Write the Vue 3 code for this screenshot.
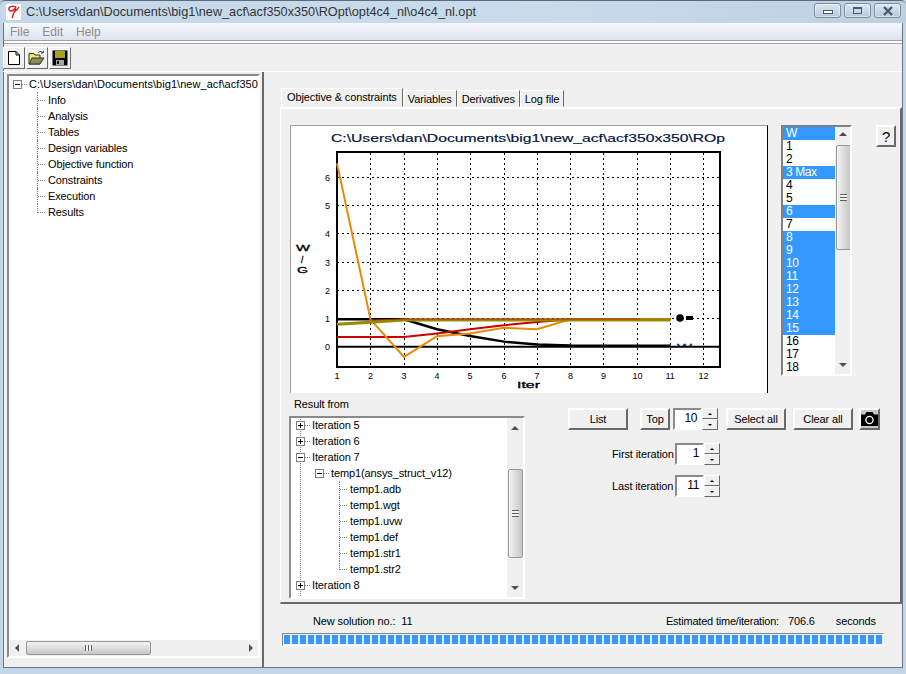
<script setup>
const path = 'C:\\Users\\dan\\Documents\\big1\\new_acf\\acf350x350\\ROpt\\opt4c4_nl\\o4c4_nl.opt'
const chartTitle = 'C:\\Users\\dan\\Documents\\big1\\new_acf\\acf350x350\\ROp'
const navItems = ['Info', 'Analysis', 'Tables', 'Design variables', 'Objective function', 'Constraints', 'Execution', 'Results']
const tabs = ['Objective & constraints', 'Variables', 'Derivatives', 'Log file']

const listItems = ['W', '1', '2', '3 Max', '4', '5', '6', '7', '8', '9', '10', '11', '12', '13', '14', '15', '16', '17', '18']
const picked = ['W', '3 Max', '6', '8', '9', '10', '11', '12', '13', '14', '15']

const files = ['temp1.adb', 'temp1.wgt', 'temp1.uvw', 'temp1.def', 'temp1.str1', 'temp1.str2']

// chart scale, in page pixels (viewBox starts at the panel corner)
const xs = [337, 370.5, 404, 437, 470, 504, 537, 570.5, 603.5, 637.5, 670.5, 703.5]
const ys = [346.7, 318.5, 290.3, 262.1, 233.9, 205.7, 177.5]
const pts = (vals) => vals.map((v, i) => `${xs[i]},${346.7 - v * 28.2}`).join(' ')

const curves = [
  { color: '#000000', w: 2.5, d: pts([0.97, 0.97, 0.97, 0.62, 0.38, 0.18, 0.08, 0.04, 0.03, 0.03, 0.03]) },
  { color: '#cc0000', w: 2, d: pts([0.34, 0.34, 0.34, 0.47, 0.62, 0.76, 0.88, 0.97, 0.97, 0.97, 0.97]) },
  { color: '#e88a00', w: 2, d: pts([6.5, 0.97, -0.36, 0.37, 0.47, 0.67, 0.62, 0.97, 0.97, 0.97, 0.97]) },
  { color: '#998800', w: 3, d: pts([0.8, 0.87, 0.95, 0.95, 0.95, 0.95, 0.95, 0.95, 0.95, 0.95, 0.95]) },
]
</script>

<template>
  <div class="window">
    <div class="titlebar">
      <svg class="app-icon" width="15" height="16" viewBox="0 0 15 16">
        <rect width="15" height="16" fill="#fff" />
        <path d="M10 3 C6 1 2 3 3 6 C4 8 8 7 10 3 L6 14 M8 8 C10 7 12 5 13 3" fill="none" stroke="#e02020" stroke-width="1.4" />
      </svg>
      <span class="title-text">{{ path }}</span>
      <div class="caption-btns">
        <div class="cap-btn"><i class="cap-min"></i></div>
        <div class="cap-btn"><i class="cap-max"></i></div>
        <div class="cap-btn cap-close">
          <svg width="12" height="10" viewBox="0 0 12 10"><path d="M2 1 L10 9 M10 1 L2 9" stroke="#4c5a68" stroke-width="2.4" /></svg>
        </div>
      </div>
    </div>

    <div class="client">
      <div class="menubar">
        <span>File</span><span>Edit</span><span>Help</span>
      </div>

      <div class="toolbar">
        <div class="tool-btn">
          <svg width="14" height="16" viewBox="0 0 14 16"><path d="M1.5 1.5 H9 L12.5 5 V14.5 H1.5 Z M9 1.5 V5 H12.5" fill="#fff" stroke="#000" /></svg>
        </div>
        <div class="tool-btn">
          <svg width="18" height="16" viewBox="0 0 18 16">
            <path d="M1 3.5 H6 L7 5 H12 V14 H1 Z" fill="#e8e860" stroke="#333" />
            <path d="M1 14 L4 8 H16 L12 14 Z" fill="#8a8a60" stroke="#333" />
            <path d="M10 3 C11 1 14 1 15 3 M15 3 L13 3 M15 3 L15.5 1" fill="none" stroke="#333" />
          </svg>
        </div>
        <div class="tool-btn">
          <svg width="16" height="16" viewBox="0 0 16 16">
            <rect x="0.5" y="0.5" width="15" height="15" fill="#000" />
            <rect x="3" y="1" width="10" height="7" fill="#a8a020" />
            <rect x="4" y="10" width="8" height="5" fill="#a8a8a8" />
            <rect x="5" y="11" width="2" height="3" fill="#000" />
          </svg>
        </div>
      </div>

      <div class="main">
        <div class="left-pane">
          <div class="nav-tree sunken">
            <div class="nav-scroll">
              <div class="nav-root">
                <i class="expander"><b></b></i>
                <i class="stub"></i>
                <span>{{ path }}</span>
              </div>
              <div class="nav-children">
                <div v-for="(item, i) in navItems" :key="item" class="row">
                  <i class="twig" :class="{ last: i === navItems.length - 1 }"></i>
                  <span>{{ item }}</span>
                </div>
              </div>
            </div>
            <div class="hscroll">
              <i class="arrow-left"></i>
              <div class="hthumb"><i class="grip-v"></i></div>
              <i class="arrow-right"></i>
            </div>
          </div>
        </div>

        <div class="splitter"></div>

        <div class="right-pane">
          <div class="tabs">
            <div v-for="(t, i) in tabs" :key="t" class="tab" :class="{ active: i === 0 }">{{ t }}</div>
          </div>

          <div class="tab-panel">
            <div class="panel-top">
              <div class="chart">
                <svg width="478" height="268" viewBox="290 125 478 268">
                  <text x="331" y="142" class="chart-title" textLength="394" lengthAdjust="spacingAndGlyphs">{{ chartTitle }}</text>

                  <g stroke="#000" stroke-width="1" stroke-dasharray="2 3" shape-rendering="crispEdges">
                    <line v-for="x in xs.slice(1)" :key="x" :x1="x" :x2="x" y1="153" y2="366" />
                    <line v-for="y in ys.slice(1)" :key="y" x1="337" x2="720" :y1="y" :y2="y" />
                  </g>
                  <text x="677" y="350" class="axis navy" textLength="15" lengthAdjust="spacingAndGlyphs">W</text>
                  <rect x="672" y="347" width="30" height="9" fill="#fff" />
                  <line x1="337" x2="720" y1="346.7" y2="346.7" stroke="#000" stroke-width="2" />
                  <rect x="337" y="152" width="383" height="215" fill="none" stroke="#000" stroke-width="2" />

                  <polyline v-for="c in curves" :key="c.color" :points="c.d" fill="none" :stroke="c.color" :stroke-width="c.w" />
                  <polyline points="370.5,320 404,319 640,319" fill="none" stroke="#b03000" stroke-width="1" />

                  <circle cx="680" cy="318" r="3.8" fill="#000" />
                  <rect x="686" y="316" width="7" height="4" fill="#000" />

                  <text v-for="(y, i) in ys" :key="'y' + i" x="325" :y="y + 3.5" class="tick">{{ i }}</text>
                  <text v-for="(x, i) in xs" :key="'x' + i" :x="x - (i > 8 ? 5 : 2.5)" y="378.5" class="tick">{{ i + 1 }}</text>
                  <text x="517" y="388" class="axis" textLength="23" lengthAdjust="spacingAndGlyphs">Iter</text>
                  <text x="296" y="251" class="axis" textLength="14" lengthAdjust="spacingAndGlyphs">W</text>
                  <text x="301" y="263" class="axis">/</text>
                  <text x="297" y="273" class="axis" textLength="11" lengthAdjust="spacingAndGlyphs">G</text>
                </svg>
              </div>

              <div class="objective-list sunken">
                <div class="list-rows">
                  <div v-for="item in listItems" :key="item" class="list-row" :class="{ on: picked.includes(item) }">{{ item }}</div>
                </div>
                <div class="vscroll list-scroll">
                  <i class="arrow-up"></i>
                  <div class="vthumb"><i class="grip-h"></i></div>
                  <i class="arrow-down"></i>
                </div>
              </div>

              <div class="btn help-btn">?</div>
            </div>

            <div class="panel-bottom">
              <div class="result-col">
                <div class="result-label">Result from</div>
                <div class="result-tree sunken">
                  <div class="result-rows">
                    <div class="iter-row"><i class="expander"><b></b><u></u></i><i class="stub"></i><span>Iteration 5</span></div>
                    <div class="iter-row"><i class="expander"><b></b><u></u></i><i class="stub"></i><span>Iteration 6</span></div>
                    <div class="iter-row"><i class="expander"><b></b></i><i class="stub"></i><span>Iteration 7</span></div>
                    <div class="iter-row sub"><i class="expander"><b></b></i><i class="stub"></i><span>temp1(ansys_struct_v12)</span></div>
                    <div class="file-rows">
                      <div v-for="(f, i) in files" :key="f" class="row">
                        <i class="twig" :class="{ last: i === files.length - 1 }"></i>
                        <span>{{ f }}</span>
                      </div>
                    </div>
                    <div class="iter-row"><i class="expander"><b></b><u></u></i><i class="stub"></i><span>Iteration 8</span></div>
                    <div class="iter-row"><i class="expander"><b></b><u></u></i><i class="stub"></i><span>Iteration 9</span></div>
                  </div>
                  <div class="vscroll tree-scroll">
                    <i class="arrow-up"></i>
                    <div class="vthumb"><i class="grip-h"></i></div>
                    <i class="arrow-down"></i>
                  </div>
                </div>
              </div>

              <div class="control-col">
                <div class="control-row">
                  <div class="btn btn-list">List</div>
                  <div class="btn btn-top">Top</div>
                  <div class="spin-wrap top-spin">
                    <div class="edit">10</div>
                    <div class="spin"><i class="spin-up"></i><i class="spin-down"></i></div>
                  </div>
                  <div class="btn btn-wide btn-select">Select all</div>
                  <div class="btn btn-wide btn-clear">Clear all</div>
                  <div class="btn btn-camera">
                    <svg width="17" height="14" viewBox="0 0 17 14">
                      <path d="M0 2.5 H4 L5.5 0 H11.5 L13 2.5 H17 V14 H0 Z" fill="#000" />
                      <circle cx="8.5" cy="8" r="3.6" fill="#000" stroke="#fff" stroke-width="1.3" />
                    </svg>
                  </div>
                </div>
                <div class="iter-field first-field">
                  <span class="field-label">First iteration</span>
                  <div class="spin-wrap">
                    <div class="edit">1</div>
                    <div class="spin"><i class="spin-up"></i><i class="spin-down"></i></div>
                  </div>
                </div>
                <div class="iter-field last-field">
                  <span class="field-label">Last iteration</span>
                  <div class="spin-wrap">
                    <div class="edit">11</div>
                    <div class="spin"><i class="spin-up"></i><i class="spin-down"></i></div>
                  </div>
                </div>
              </div>
            </div>
          </div>

          <div class="status">
            <span class="status-solution">New solution no.:&nbsp; 11</span>
            <span class="status-est">Estimated time/iteration:</span>
            <span class="status-time">706.6</span>
            <span class="status-unit">seconds</span>
          </div>
          <div class="progress"><div class="progress-fill"></div></div>
        </div>
      </div>
    </div>
  </div>
</template>

<style>
html, body { margin: 0; padding: 0; }
</style>

<style scoped>
.window { width: 906px; height: 674px; box-sizing: border-box; padding: 0 3px 6px 3px; display: flex; flex-direction: column; background: #c3d6e8; font-family: 'Liberation Sans', Arial, sans-serif; font-size: 11px; letter-spacing: -0.12px; color: #000; overflow: hidden; }
.window i { display: block; font-style: normal; }

.titlebar { height: 23px; flex: none; display: flex; align-items: center; background: linear-gradient(90deg, #c4d8ea, #c9dbeb 60%, #bdd1e3); border-top: 1px solid #5d6b78; box-sizing: border-box; margin: 0 -3px; padding: 0 5px 0 6px; border-radius: 5px 5px 0 0; }
.app-icon { flex: none; }
.title-text { margin-left: 5px; color: #333; font-size: 12.7px; letter-spacing: 0; white-space: nowrap; flex: 1; }
.caption-btns { display: flex; gap: 3px; margin-top: -3px; }
.cap-btn { width: 27px; height: 15px; box-sizing: border-box; border: 1px solid #7c8c9b; border-radius: 3px; background: linear-gradient(#dde8f2, #b6c9da); display: flex; align-items: center; justify-content: center; box-shadow: inset 0 0 0 1px rgba(255,255,255,0.45); }
.cap-min { width: 8px; height: 2px; border: 1px solid #4c5a68; background: #fff; margin-top: 3px; }
.cap-max { width: 7px; height: 4px; border: 1px solid #4c5a68; border-top-width: 2px; border-bottom-width: 1px; }

.client { flex: 1; min-height: 0; display: flex; flex-direction: column; background: #f0f0f0; border-left: 1px solid #6a7682; border-right: 1px solid #6a7682; border-bottom: 1px solid #6a7682; }

.menubar { height: 18px; box-sizing: border-box; flex: none; display: flex; gap: 13px; padding-left: 6px; align-items: center; background: linear-gradient(#f6f8fc, #dde3f1); color: #8c8c8c; font-size: 12px; letter-spacing: 0; border-bottom: 1px solid #a0a0a0; box-shadow: 0 2px 0 #fff, 0 3px 0 #a8a8a8; }
.toolbar { height: 24px; flex: none; display: flex; gap: 1px; margin-top: 3px; margin-left: -1px; padding: 3px 0 0 0; border-bottom: 1px solid #fff; }
.tool-btn { width: 22px; height: 22px; box-sizing: border-box; background: #f0f0f0; border: 1px solid; border-color: #fff #696969 #696969 #fff; display: flex; align-items: center; justify-content: center; }

.main { flex: 1; min-height: 0; display: flex; }

.sunken { border: 2px solid; border-color: #8a8a8a #fff #fff #8a8a8a; box-sizing: border-box; background: #fff; }

.left-pane { width: 258px; flex: none; padding: 2px 2px 9px 3px; box-sizing: border-box; display: flex; }
.nav-tree { flex: 1; display: flex; flex-direction: column; min-width: 0; }
.nav-scroll { flex: 1; overflow: hidden; padding: 0 0 0 4px; }
.nav-root { height: 16px; display: flex; align-items: center; white-space: nowrap; letter-spacing: 0.05px; }
.nav-root span { margin-left: 1px; }
.nav-children { margin-left: 24px; }

.row { height: 16px; display: flex; align-items: center; white-space: nowrap; }
.row span { margin-left: 2px; }
.twig { width: 9px; height: 16px; flex: none; box-sizing: border-box; border-left: 1px dotted #808080; background: repeating-linear-gradient(90deg, #808080 0 1px, transparent 1px 2px) 0 8px / 100% 1px no-repeat; }
.twig.last { height: 9px; align-self: flex-start; background-position: 0 8px; }

.expander { width: 9px; height: 9px; flex: none; box-sizing: border-box; border: 1px solid #808080; background: #fff; position: relative; }
.expander b { position: absolute; left: 1px; right: 1px; top: 3px; height: 1px; background: #000; }
.expander u { position: absolute; top: 1px; bottom: 1px; left: 3px; width: 1px; background: #000; }
.stub { width: 6px; height: 1px; flex: none; background: repeating-linear-gradient(90deg, #808080 0 1px, transparent 1px 2px); }

.hscroll { height: 16px; flex: none; display: flex; align-items: center; background: #f0f0f0; }
.arrow-left { width: 0; height: 0; margin: 0 7px 0 6px; border: 4px solid transparent; border-left: 0; border-right: 4px solid #505050; }
.arrow-right { width: 0; height: 0; margin-left: auto; margin-right: 5px; border: 4px solid transparent; border-right: 0; border-left: 4px solid #505050; }
.hthumb { width: 125px; height: 14px; box-sizing: border-box; border: 1px solid #979797; border-radius: 2px; background: linear-gradient(#f4f4f4, #dcdcdc 50%, #c8c8c8); display: flex; align-items: center; justify-content: center; }
.grip-v { width: 7px; height: 6px; background: repeating-linear-gradient(90deg, #606060 0 1px, #f0f0f0 1px 3px); }

.splitter { width: 1px; flex: none; background: #f0f0f0; border-left: 2px solid #696969; }

.right-pane { flex: 1; min-width: 0; display: flex; flex-direction: column; padding: 16px 0 0 15px; box-sizing: border-box; }

.tabs { display: flex; height: 19px; flex: none; align-items: flex-end; padding-left: 1px; }
.tab { height: 17px; box-sizing: border-box; padding: 2px 4px 0 4px; border: 1px solid; border-color: #fff #696969 #f0f0f0 #fff; white-space: nowrap; }
.tab.active { height: 19px; padding-left: 5px; padding-right: 5px; }

.tab-panel { height: 497px; flex: none; box-sizing: border-box; border: 2px solid; border-color: #fff #696969 #696969 #fff; border-left-width: 1px; padding: 16px 0 0 9px; }

.panel-top { display: flex; align-items: flex-start; }
.chart { width: 478px; height: 268px; flex: none; background: #fff; border-left: 1px solid #a0a0a0; border-top: 1px solid #a0a0a0; border-right: 1px solid #000; box-sizing: border-box; overflow: hidden; }
.chart svg { display: block; margin: -1px 0 0 -1px; }
.chart-title { font-family: 'Liberation Sans', Arial, sans-serif; font-size: 10.5px; letter-spacing: 0; font-weight: 400; fill: #00103c; stroke: #00103c; stroke-width: 0.15px; }
.tick { font-family: 'Liberation Sans', Arial, sans-serif; font-size: 9px; letter-spacing: 0; fill: #000; }
.axis { font-family: 'Liberation Sans', Arial, sans-serif; font-size: 8.5px; letter-spacing: 0; fill: #000; stroke: #000; stroke-width: 0.3px; }
.axis.navy { fill: #003080; stroke: #003080; }

.objective-list { width: 71px; height: 251px; flex: none; margin-left: 13px; display: flex; overflow: hidden; border-color: #808080 #fff #fff #808080; }
.list-rows { width: 52px; flex: none; }
.list-row { height: 13px; line-height: 13px; padding-left: 3px; font-size: 12px; letter-spacing: -0.4px; }
.list-row.on { background: #3399ff; color: #fff; }

.vscroll { width: 16px; flex: none; background: #f0f0f0; display: flex; flex-direction: column; align-items: center; box-sizing: border-box; }
.arrow-up { width: 0; height: 0; border: 4px solid transparent; border-top: 0; border-bottom: 4px solid #505050; }
.arrow-down { width: 0; height: 0; border: 4px solid transparent; border-bottom: 0; border-top: 4px solid #505050; margin-top: auto; margin-bottom: 7px; }
.vthumb { width: 15px; box-sizing: border-box; border: 1px solid #979797; border-radius: 2px; background: linear-gradient(90deg, #f4f4f4, #dcdcdc 50%, #c8c8c8); display: flex; align-items: center; justify-content: center; }
.grip-h { width: 7px; height: 7px; background: repeating-linear-gradient(#606060 0 1px, #f0f0f0 1px 3px); }
.list-scroll { padding-top: 5px; }
.list-scroll .vthumb { height: 105px; margin-top: 9px; }
.tree-scroll { padding-top: 8px; }
.tree-scroll .vthumb { height: 89px; margin-top: 39px; }

.btn { box-sizing: border-box; background: #f0f0f0; border: 2px solid; border-color: #fff #696969 #696969 #fff; display: flex; align-items: center; justify-content: center; white-space: nowrap; }
.help-btn { width: 20px; height: 22px; margin-left: 24px; font-size: 15px; }

.panel-bottom { display: flex; align-items: flex-start; }
.result-col { width: 236px; flex: none; margin-left: -1px; }
.result-label { height: 23px; line-height: 22px; padding-left: 5px; box-sizing: border-box; }
.result-tree { height: 183px; display: flex; overflow: hidden; }
.result-rows { flex: 1; min-width: 0; overflow: hidden; margin-top: -1px; background: repeating-linear-gradient(#808080 0 1px, transparent 1px 2px) 9px 0 / 1px 100% no-repeat; }
.iter-row { height: 16px; display: flex; align-items: center; padding-left: 5px; white-space: nowrap; }
.iter-row span { margin-left: 1px; }
.iter-row.sub { padding-left: 24px; }
.file-rows { margin-left: 48px; }

.control-col { margin-left: 43px; padding-top: 15px; }
.control-row { display: flex; align-items: flex-start; }
.btn-list { width: 60px; height: 22px; }
.btn-top { width: 30px; height: 22px; margin-left: 12px; }
.top-spin { margin-left: 3px; }
.btn-wide { width: 60px; height: 22px; }
.btn-select { margin-left: 8px; }
.btn-clear { margin-left: 7px; }
.btn-camera { width: 21px; height: 22px; margin-left: 6px; background: #c8c8c8; }

.spin-wrap { display: flex; height: 22px; }
.edit { width: 29px; height: 22px; box-sizing: border-box; border: 2px solid; border-color: #8a8a8a #fff #fff #8a8a8a; background: #fff; text-align: right; padding: 1px 3px 0 0; font-size: 12px; letter-spacing: -0.4px; }
.spin { width: 16px; height: 22px; display: flex; flex-direction: column; }
.spin i { height: 11px; box-sizing: border-box; border: 1px solid; border-color: #fff #696969 #696969 #fff; display: flex; align-items: center; justify-content: center; }
.spin-up::after { content: ''; border: 2px solid transparent; border-top: 0; border-bottom: 2px solid #000; }
.spin-down::after { content: ''; border: 2px solid transparent; border-bottom: 0; border-top: 2px solid #000; }

.iter-field { display: flex; align-items: center; margin-left: 44px; }
.field-label { width: 63px; white-space: nowrap; }
.first-field { margin-top: 13px; }
.last-field { margin-top: 10px; }

.status { height: 20px; flex: none; margin-top: 7px; display: flex; align-items: center; white-space: nowrap; }
.status-solution { margin-left: 33px; }
.status-est { margin-left: auto; letter-spacing: -0.2px; }
.status-time { margin-left: 9px; }
.status-unit { margin-left: 21px; margin-right: 26px; }

.progress { width: 602px; height: 13px; box-sizing: border-box; margin: 2px 0 0 2px; border: 1px solid; border-color: #8a8a8a #fff #fff #8a8a8a; padding: 1px; }
.progress-fill { height: 100%; background: repeating-linear-gradient(90deg, #3399ff 0 6px, transparent 6px 8px); }
</style>
